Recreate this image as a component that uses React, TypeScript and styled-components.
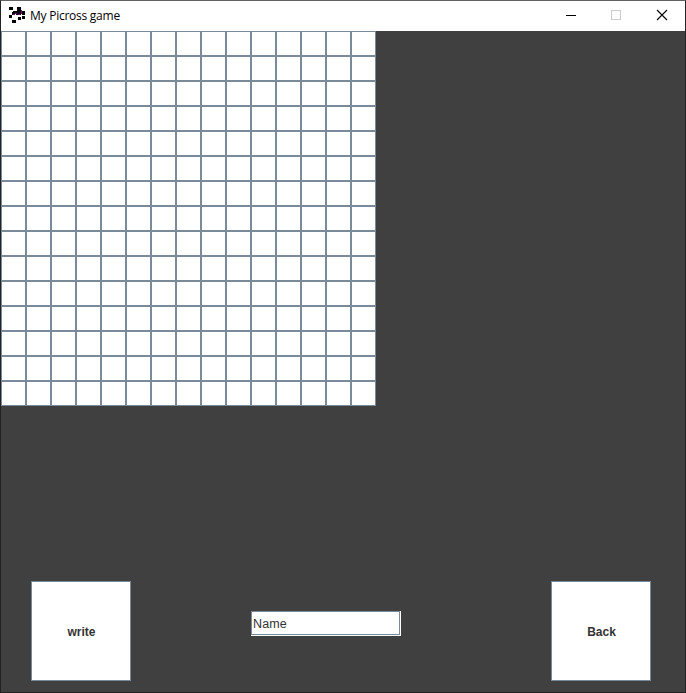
import React, { useState } from "react";
import styled, { createGlobalStyle } from "styled-components";

const GlobalStyle = createGlobalStyle`
  * { box-sizing: border-box; }
  body { margin: 0; background: #404040; overflow: hidden; }
`;

const Window = styled.div`
  width: 686px;
  height: 693px;
  display: flex;
  flex-direction: column;
  border: 1px solid #232323;
  border-top-color: #626262;
  background: #404040;
`;

const TitleBar = styled.header`
  height: 30px;
  flex: none;
  display: flex;
  background: #fff;
  padding-left: 8px;
`;

const AppIcon = styled.svg`
  margin-top: 6px;
  flex: none;
`;

const Title = styled.h1`
  margin: 0 auto 0 5px;
  font: 400 12px/30px "Open Sans", "Noto Sans", sans-serif;
  letter-spacing: -0.25px;
  color: #000;
`;

const Control = styled.button`
  width: 46px;
  height: 30px;
  padding: 0;
  border: 0;
  background: none;
`;

const ControlGlyph = styled.svg`
  display: block;
`;

const Content = styled.main`
  flex: 1;
  display: flex;
  flex-direction: column;
  justify-content: space-between;
`;

const Board = styled.div`
  display: grid;
  grid-template-columns: repeat(15, 25px);
  grid-auto-rows: 25px;
`;

const Cell = styled.button`
  padding: 0;
  border: 1px solid #7a8a99;
  background: #fff;
`;

const Footer = styled.footer`
  display: flex;
  align-items: flex-start;
  justify-content: space-between;
  padding: 0 34px 11px 30px;
`;

const ActionButton = styled.button`
  width: 100px;
  height: 100px;
  padding: 1px 0 0 1px;
  border: 1px solid #7a8a99;
  background: #fff;
  color: #333;
  font: bold 12px "Liberation Sans", Arial, sans-serif;
`;

const NameFrame = styled.div`
  width: 150px;
  height: 25px;
  margin: 30px 30px 0 0;
  padding: 0 1px 1px 0;
  background: #fff;
`;

const NameInput = styled.input`
  display: block;
  width: 149px;
  height: 24px;
  padding: 1px 1px 0;
  border: 1px solid #7a8a99;
  border-radius: 0;
  outline: none;
  background: #fff;
  color: #333;
  font: 12.5px "Liberation Sans", Arial, sans-serif;
  letter-spacing: 0.15px;
`;

const cells = Array.from({ length: 225 }, (_, i) => i);

export default function App() {
  const [name, setName] = useState("Name");
  return (
    <>
      <GlobalStyle />
      <Window>
        <TitleBar>
          <AppIcon width="16" height="16" viewBox="0 0 16 16" shapeRendering="crispEdges">
            <path
              fill="#000"
              d="M0 0h4v3H0zM8 0h4v4H8zM4 4h8v3H4zM3 5h2v3H3zM13 4h3v4h-3zM0 8h3v3H0zM7 7h5v1H7zM13 9h3v3h-3zM9 10h3v3H9zM3 13h4v3H3z"
            />
            <path fill="#7d007d" d="M12 3h1v4h-1zM4 7h2v1H4zM6 6h2v1H6zM9 7h2v1H9z" />
          </AppIcon>
          <Title>My Picross game</Title>
          <Control aria-label="Minimize">
            <ControlGlyph width="46" height="30" shapeRendering="crispEdges">
              <path d="M19 14h10v1H19z" />
            </ControlGlyph>
          </Control>
          <Control aria-label="Maximize" disabled>
            <ControlGlyph width="46" height="30">
              <rect x="18.5" y="9.5" width="9" height="9" fill="none" stroke="#ccc" />
            </ControlGlyph>
          </Control>
          <Control aria-label="Close">
            <ControlGlyph width="46" height="30">
              <path d="M18 9l10 10M28 9L18 19" stroke="#000" strokeWidth="1.1" />
            </ControlGlyph>
          </Control>
        </TitleBar>
        <Content>
          <Board>
            {cells.map((i) => (
              <Cell key={i} aria-label={`Cell ${i + 1}`} />
            ))}
          </Board>
          <Footer>
            <ActionButton>write</ActionButton>
            <NameFrame>
              <NameInput aria-label="Name" value={name} onChange={(e) => setName(e.target.value)} />
            </NameFrame>
            <ActionButton>Back</ActionButton>
          </Footer>
        </Content>
      </Window>
    </>
  );
}
